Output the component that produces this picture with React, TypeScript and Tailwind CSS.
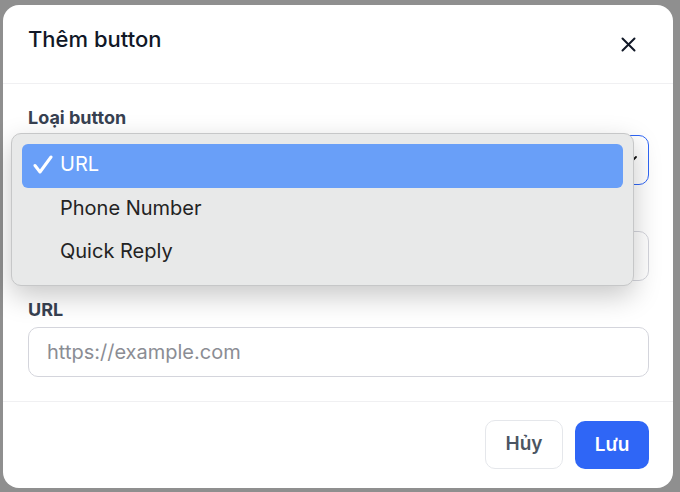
import { ReactNode } from 'react'

const font = { fontFamily: 'Inter, "Noto Sans", sans-serif' }

function Field({ label, children }: { label?: string; children: ReactNode }) {
    return (
        <div className="flex flex-col gap-[5px]">
            <label className="h-[24px] text-[18px] leading-[24px] font-bold text-[#374151]">{label}</label>
            {children}
        </div>
    )
}

const options = ['URL', 'Phone Number', 'Quick Reply']

export default function App() {
    return (
        <div className="relative w-[680px] h-[492px] overflow-hidden bg-[#8f8f8f] pt-[5px] pl-[3px]" style={font}>
            <div className="w-[670px] h-[483px] bg-white rounded-[16px] flex flex-col overflow-hidden">
                {/* header */}
                <div className="h-[79px] shrink-0 border-b border-[#f0f0f2] flex items-start justify-between pl-[25px] pr-[37px]">
                    <h2 className="pt-[20px] text-[22px] leading-[28px] font-medium text-[#111827]">Thêm button</h2>
                    <button className="mt-[32px] text-[#111827]">
                        <svg width="15" height="15" viewBox="0 0 15 15" fill="none" stroke="currentColor" strokeWidth="2" strokeLinecap="round">
                            <path d="M1.5 1.5l12 12M13.5 1.5l-12 12" />
                        </svg>
                    </button>
                </div>

                {/* body */}
                <div className="flex flex-col gap-[17px] pl-[25px] pr-[24px] pt-[22px] pb-[24px] border-b border-[#f0f0f2]">
                    <Field label="Loại button">
                        {/* value hidden under the open popup */}
                        <div className="h-[50px] rounded-[10px] border-[1.5px] border-[#2f66f6] flex items-center justify-end pr-[10px]">
                            <svg width="16" height="16" viewBox="0 0 16 16" fill="none" stroke="#111" strokeWidth="1.8" strokeLinecap="round" strokeLinejoin="round">
                                <path d="M2 5l6 6 6-6" />
                            </svg>
                        </div>
                    </Field>
                    <Field>
                        <div className="h-[50px] rounded-[10px] border border-[#d4d5dc]" />
                    </Field>
                    <Field label="URL">
                        <input
                            className="h-[50px] rounded-[10px] border border-[#d4d5dc] px-[18px] text-[20px] outline-none placeholder:text-[#8b8d94]"
                            placeholder="https://example.com"
                        />
                    </Field>
                </div>

                {/* footer */}
                <div className="flex justify-end gap-[12px] pt-[18px] pl-[25px] pr-[24px]">
                    <button className="h-[49px] w-[78px] rounded-[10px] border border-[#e5e7eb] bg-white text-[19px] font-semibold text-[#4b5563]">
                        Hủy
                    </button>
                    <button className="h-[48px] w-[74px] mt-[1px] rounded-[10px] bg-[#2f66f6] text-[19px] font-semibold text-white">
                        Lưu
                    </button>
                </div>
            </div>

            {/* native select popup */}
            <div className="absolute left-[11px] top-[133px] w-[623px] h-[153px] rounded-[10px] border border-[#c6c7c8] bg-[#e8e9e9] p-[10px] shadow-[0_10px_28px_rgba(0,0,0,0.22)]">
                {options.map((opt, i) => (
                    <div
                        key={opt}
                        className={`h-[43.5px] flex items-center rounded-[6px] pb-[3px] ${i === 0 ? 'bg-[#699ff8] text-white' : 'text-[#232323]'}`}
                    >
                        <span className="w-[38px] flex justify-center pl-[4px]">
                            {i === 0 && (
                                <svg width="20" height="19" viewBox="0 0 20 19" fill="none" stroke="white" strokeWidth="3" strokeLinecap="round" strokeLinejoin="round">
                                    <path d="M2 10.5l5 6.5L18 2" />
                                </svg>
                            )}
                        </span>
                        <span className="text-[20px]">{opt}</span>
                    </div>
                ))}
            </div>
        </div>
    )
}
